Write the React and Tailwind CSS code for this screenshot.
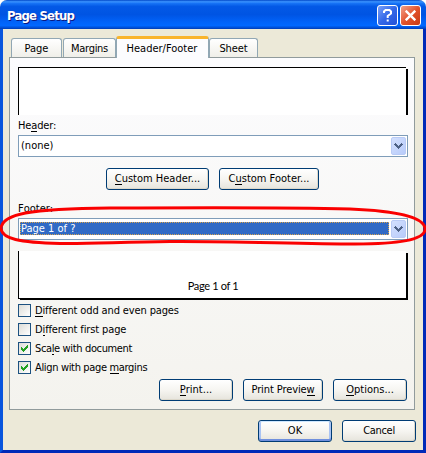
import React from "react";

const U = ({ children }) => (
  <span className="relative">
    {children}
    <span className="absolute bottom-[0px] left-0 h-px w-full bg-black" />
  </span>
);

const Button = ({ children, className = "", primary = false }) => (
  <button
    className={`flex h-[22px] shrink-0 items-center justify-center whitespace-nowrap rounded-[3px] border border-[#003c74] bg-gradient-to-b from-white via-[#f6f5f1] to-[#e6e4dc] pb-px leading-[14px] ${
      primary
        ? "shadow-[inset_0_1px_0_#cee7ff,inset_0_-2px_0_#6f8fdd,inset_2px_0_0_#a9c3f3,inset_-2px_0_0_#a9c3f3]"
        : "shadow-[inset_-1px_-1px_0_#dcd8cb]"
    } ${className}`}
  >
    <span>{children}</span>
  </button>
);

const Tab = ({ children, className }) => (
  <div
    className={`flex h-[19px] items-center justify-center rounded-t-[3px] border border-b-0 border-[#91a7b4] bg-gradient-to-b from-white to-[#f0efe9] pt-px ${className}`}
  >
    {children}
  </div>
);

const Arrow = () => (
  <div className="flex h-[18px] w-[15px] shrink-0 items-center justify-center rounded-[2px] border border-[#b9cbf6] bg-gradient-to-br from-[#d3e0fe] to-[#b8cbfa]">
    <svg width="9" height="6" viewBox="0 0 9 6" shapeRendering="crispEdges">
      <path d="M1 0h1v1h1v1h1v1h1v-1h1v-1h1v-1h1v1h1v1h-1v1h-1v1h-1v1h-1v1h-1v-1h-1v-1h-1v-1h-1v-1h-1v-1h1z" fill="#4d6185" />
    </svg>
  </div>
);

const Check = ({ checked, children, className = "" }) => (
  <label className="flex h-[19px] items-start">
    <span className="flex h-[13px] w-[13px] items-center justify-center border border-[#1c5180] bg-gradient-to-br from-[#dcdcd7] to-white">
      {checked && (
        <svg width="7" height="7" viewBox="0 0 7 7" shapeRendering="crispEdges">
          <path d="M0 2h1v1h1v1h1v-1h1v-1h1v-1h1v-1h1v3h-1v1h-1v1h-1v1h-1v1h-1v-1h-1v-1h-1z" fill="#21a121" />
        </svg>
      )}
    </span>
    <span className={`ml-[4px] leading-[14px] ${className}`}>{children}</span>
  </label>
);

export default function App() {
  return (
    <div className="relative flex h-[453px] w-[426px] flex-col overflow-hidden whitespace-nowrap rounded-t-[7px] bg-[#ece9d8] font-['DejaVu_Sans_Condensed','DejaVu_Sans',sans-serif] text-[11px] leading-[14px] text-black [font-stretch:condensed]">
      <header className="flex h-[29px] shrink-0 items-center bg-[linear-gradient(180deg,#0148c8_0%,#3a93ff_6%,#1672f5_12%,#0359e6_22%,#0054e3_50%,#0162f8_75%,#0168ff_88%,#0050d8_95%,#003cb5_100%)] pl-[7px] pr-[5px] pt-[2px]">
        <h1 className="pt-px text-[13px] font-bold leading-[16px] tracking-[-0.8px] text-white [text-shadow:1px_1px_0_#0a1883]">Page Setup</h1>
        <div className="ml-auto flex gap-[2px]">
          <div className="flex h-[21px] w-[21px] items-center justify-center rounded-[3px] border border-white bg-gradient-to-br from-[#7aa0f8] via-[#3468e8] to-[#2150d8]">
            <svg width="11" height="13" viewBox="0 0 11 13" fill="none" stroke="white" strokeWidth="2">
              <path d="M2 4V2.5L3.5 1h4L9 2.500v2L5.700 7v2M4.700 11.500h2" />
            </svg>
          </div>
          <div className="flex h-[21px] w-[21px] items-center justify-center rounded-[3px] border border-white bg-gradient-to-br from-[#f0a088] via-[#e2532c] to-[#c83a12]">
            <svg width="11" height="11" viewBox="0 0 11 11" stroke="white" strokeWidth="2.4">
              <path d="M.7.7l9.6 9.6M10.3.7L.7 10.3" />
            </svg>
          </div>
        </div>
      </header>
      <main className="flex min-h-0 flex-1 flex-col border-x-[3px] border-b-[3px] border-l-[#0855dd] border-r-[#0029b8] border-b-[#0029b8] px-[6px]">
        <nav className="flex h-[28px] shrink-0 items-end pl-[2px]">
          <Tab className="w-[51px]">Page</Tab>
          <Tab className="ml-px w-[53px] tracking-[-0.3px]">Margins</Tab>
          <div className="z-10 -mb-px flex h-[22px] w-[93px] items-center justify-center rounded-t-[3px] border-x border-t-[3px] border-x-[#91a7b4] border-t-[#f9b42c] bg-[#fcfcfe] pr-px">Header/Footer</div>
          <Tab className="w-[49px] tracking-[-0.1px]">Sheet</Tab>
        </nav>
        <section className="flex h-[353px] w-[406px] shrink-0 flex-col border border-[#919b9c] bg-gradient-to-b from-[#fcfcfe] to-[#f4f3ee] px-[8px] pt-[9px]">
          <div className="flex h-[48px] w-[390px] shrink-0">
            <div className="w-[388px] border-l border-t border-black bg-white" />
            <div className="mt-[2px] w-[2px] bg-black" />
          </div>
          <div className="mt-[4px] h-[16px] shrink-0 tracking-[-0.15px]"><span>He<U>a</U>der:</span></div>
          <div className="flex h-[22px] w-[390px] shrink-0 items-center justify-between border border-[#7f9db9] bg-white pl-[2px] pr-px">
            <span className="pb-px">(none)</span>
            <Arrow />
          </div>
          <div className="mt-[11px] flex shrink-0 gap-[10px] pl-[88px]">
            <Button className="w-[103px]"><U>C</U>ustom Header...</Button>
            <Button className="w-[100px]">C<U>u</U>stom Footer...</Button>
          </div>
          <div className="mt-[12px] h-[16px] shrink-0"><span><U>F</U>ooter:</span></div>
          <div className="flex h-[22px] w-[390px] shrink-0 items-start justify-between border border-[#7f9db9] bg-white pl-px pr-px pt-px">
            <span className="mt-[2px] flex h-[13px] w-[369px] items-center border border-dotted border-[#d8a34d] bg-[#316ac5] text-white">Page 1 of ?</span>
            <Arrow />
          </div>
          <div className="mt-[11px] flex h-[49px] w-[390px] shrink-0 flex-col">
            <div className="flex flex-1">
              <div className="w-[388px] border-b border-l border-black bg-white pl-px pt-[28px] text-center font-['Lato',sans-serif] text-[11px] leading-[14px] tracking-[-0.35px]">Page 1 of 1</div>
              <div className="mt-[2px] w-[2px] bg-black" />
            </div>
            <div className="ml-[2px] h-px bg-black" />
          </div>
          <div className="mt-[4px] flex shrink-0 flex-col">
            <Check className="tracking-[-0.13px]"><U>D</U>ifferent odd and even pages</Check>
            <Check className="tracking-[-0.13px]">D<U>i</U>fferent first page</Check>
            <Check checked className="tracking-[-0.36px]">Sca<U>l</U>e with document</Check>
            <Check checked className="tracking-[-0.34px]">Align with page <U>m</U>argins</Check>
          </div>
          <div className="mt-[-1px] flex shrink-0 gap-[10px] pl-[141px]">
            <Button className="w-[74px]"><U>P</U>rint...</Button>
            <Button className="w-[80px] tracking-[-0.1px]">Print Previe<U>w</U></Button>
            <Button className="w-[74px]"><U>O</U>ptions...</Button>
          </div>
        </section>
        <footer className="mt-[10px] flex shrink-0 gap-[10px] pl-[249px]">
          <Button primary className="w-[74px]">OK</Button>
          <Button className="w-[74px] tracking-[-0.3px]">Cancel</Button>
        </footer>
      </main>
      <svg className="pointer-events-none absolute left-0 top-0" width="426" height="453" fill="none" stroke="#fa0000">
        <path d="M1 229C1 214 30 208.500 110 208C190 207.500 300 207.500 350 209C400 211 425 218 425 229C425 240 398 244 355 244C300 244 230 241 170 241.500C120 242 90 244 60 243.500C20 242.500 1 239 1 228" strokeWidth="3" />
      </svg>
    </div>
  );
}
